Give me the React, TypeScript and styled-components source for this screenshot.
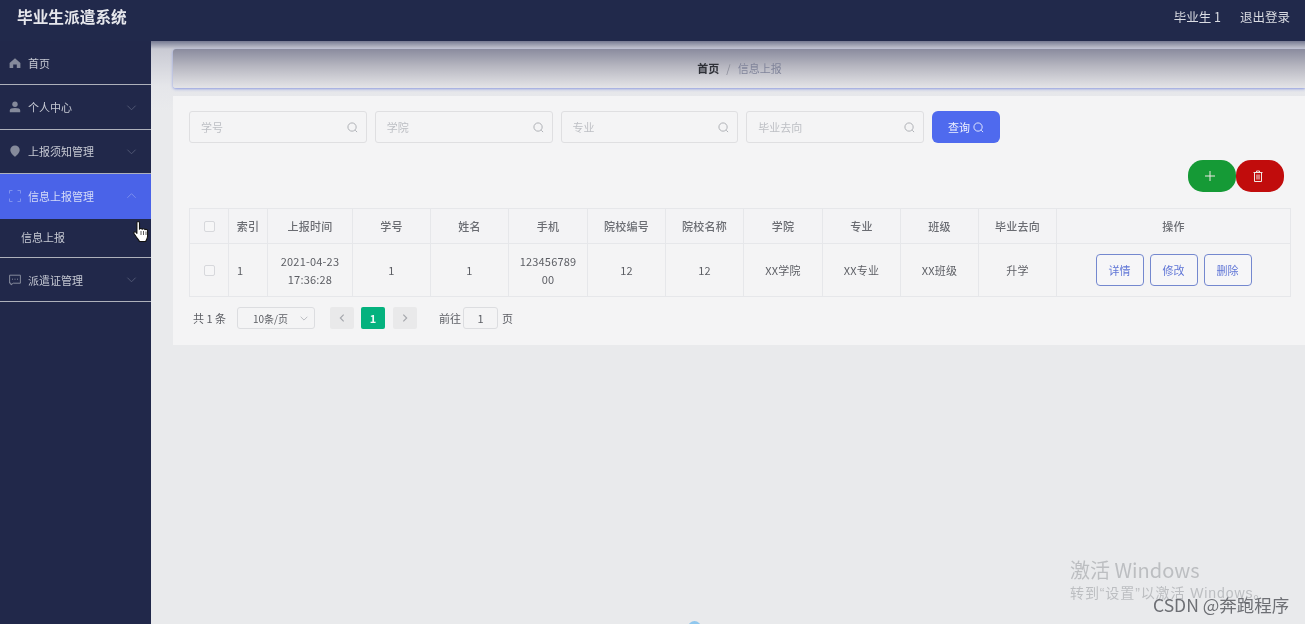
import styled, { createGlobalStyle } from 'styled-components';

const GlobalStyle = createGlobalStyle`
  html, body {
    margin: 0;
    padding: 0;
    background: #e9eaec;
  }
  * {
    box-sizing: border-box;
  }
  body {
    font-family: "Noto Sans CJK SC", "Liberation Sans", sans-serif;
    font-size: 11px;
    overflow: hidden;
  }
`;

const Page = styled.div`
  position: relative;
  width: 1305px;
  height: 624px;
  display: flex;
  flex-direction: column;
  overflow: hidden;
  filter: blur(0.35px);
`;

const TopBar = styled.header`
  height: 41px;
  flex: none;
  display: flex;
  align-items: center;
  justify-content: space-between;
  padding: 0 15px 8px 17px;
  background: #21294b;
  color: #d9dbe2;
`;

const Title = styled.div`
  font-size: 15.7px;
  font-weight: 700;
  color: #e6e7ec;
`;

const UserBox = styled.div`
  display: flex;
  gap: 19px;
  font-size: 12.5px;
`;

const Body = styled.div`
  flex: 1;
  display: flex;
  min-height: 0;
`;

const Sidebar = styled.aside`
  width: 151px;
  flex: none;
  background: #21284a;
`;

const MenuItem = styled.div<{ $active?: boolean }>`
  height: 44.4px;
  display: flex;
  align-items: center;
  gap: 7px;
  padding: 0 14px 0 9px;
  background: ${({ $active }) => ($active ? '#4a63e8' : 'transparent')};
  border-bottom: 1px solid ${({ $active }) => ($active ? '#4a63e8' : '#aeb1bb')};
  color: ${({ $active }) => ($active ? '#d5dbf8' : '#c6c9d3')};
  font-size: 11px;
  svg.lead {
    width: 12px;
    height: 12px;
    flex: none;
    color: ${({ $active }) => ($active ? '#7f92ee' : '#858a9b')};
  }
  svg.arrow {
    width: 11px;
    height: 11px;
    margin-left: auto;
    flex: none;
    color: ${({ $active }) => ($active ? '#7f92ee' : '#545b77')};
  }
`;

const SubItem = styled.div`
  height: 39.5px;
  display: flex;
  align-items: center;
  padding: 0 0 1px 21px;
  border-bottom: 1px solid #aeb1bb;
  color: #c6c9d3;
  font-size: 11px;
`;

const Main = styled.main`
  flex: 1;
  min-width: 0;
  padding: 8px 0 0 22px;
  background: linear-gradient(180deg, #767a92 0, #c9cad3 8px, #e5e6ea 45px, #e9eaec 70px);
`;

const Crumbs = styled.nav`
  height: 39px;
  display: flex;
  align-items: center;
  justify-content: center;
  gap: 7px;
  padding: 0 0 2px 1px;
  border-radius: 3px 0 0 3px;
  background: linear-gradient(180deg, #8a8b9e 0, #b7b7c1 45%, #e4e4e7 100%);
  box-shadow: 0 1px 3px #8a98de;
  font-size: 11px;
`;

const CrumbHome = styled.span`
  color: #2f3138;
  font-weight: 700;
`;

const CrumbSep = styled.span`
  color: #8b8d99;
`;

const CrumbNow = styled.span`
  color: #80849a;
`;

const Panel = styled.section`
  margin-top: 8px;
  padding: 15px 14px 16px 16px;
  background: #f4f4f5;
`;

const SearchRow = styled.div`
  display: flex;
  gap: 8px;
`;

const SearchField = styled.div`
  width: 177.75px;
  height: 32px;
  display: flex;
  align-items: center;
  justify-content: space-between;
  padding: 0 8px 0 11px;
  border: 1px solid #dfdfe1;
  border-radius: 3px;
  color: #bdbfc4;
  font-size: 11px;
  svg {
    width: 11px;
    height: 11px;
    color: #a9abb0;
  }
`;

const QueryButton = styled.button`
  width: 68px;
  height: 32px;
  display: flex;
  align-items: center;
  justify-content: center;
  gap: 3px;
  padding: 0;
  border: 0;
  border-radius: 6px;
  background: #4f6aee;
  color: #eef1fe;
  font: inherit;
  svg {
    width: 11px;
    height: 11px;
  }
`;

const ActionRow = styled.div`
  display: flex;
  justify-content: flex-end;
  margin: 17px 7px 0 0;
`;

const RoundButton = styled.button<{ $bg: string }>`
  width: 48px;
  height: 32px;
  display: flex;
  align-items: center;
  justify-content: center;
  padding: 0 4px 0 0;
  border: 0;
  border-radius: 15px;
  background: ${({ $bg }) => $bg};
  color: #f0e9e4;
  svg {
    width: 12px;
    height: 12px;
  }
`;

const columns = '39px 39px 85px 78px 78px 79px 78px 78px 79px 78px 78px 78px 1fr';

const Table = styled.div`
  margin-top: 16px;
  border-top: 1px solid #e6e7ea;
  border-left: 1px solid #e6e7ea;
`;

const Row = styled.div<{ $head?: boolean }>`
  display: grid;
  grid-template-columns: ${columns};
  height: ${({ $head }) => ($head ? '35px' : '53px')};
  color: ${({ $head }) => ($head ? '#6a6c72' : '#5c5e64')};
  font-weight: ${({ $head }) => ($head ? 500 : 400)};
  background: ${({ $head }) => ($head ? '#f3f3f5' : '#f4f4f5')};
  white-space: ${({ $head }) => ($head ? 'nowrap' : 'normal')};
`;

const Cell = styled.div<{ $left?: boolean }>`
  display: flex;
  align-items: center;
  justify-content: ${({ $left }) => ($left ? 'flex-start' : 'center')};
  padding: 0 ${({ $left }) => ($left ? '8px' : '10px')};
  border-right: 1px solid #e6e7ea;
  border-bottom: 1px solid #e6e7ea;
  line-height: 18px;
  letter-spacing: 0.2px;
  text-align: center;
  word-break: break-all;
`;

const DateText = styled.span`
  word-break: normal;
`;

const Check = styled.span`
  width: 11px;
  height: 11px;
  flex: none;
  border: 1px solid #d7d8dc;
  border-radius: 2px;
  background: #f6f6f7;
`;

const ButtonGroup = styled.div`
  display: flex;
  gap: 6px;
`;

const RowButton = styled.button`
  width: 48px;
  height: 32px;
  padding: 0;
  border: 1px solid #7488cf;
  border-radius: 4px;
  background: #f6f6f8;
  color: #5f75d6;
  font: inherit;
`;

const Pager = styled.div`
  display: flex;
  align-items: center;
  height: 22px;
  margin-top: 10px;
  padding-left: 4px;
  color: #5c5e64;
`;

const Total = styled.span`
  width: 44px;
`;

const PageSize = styled.div`
  width: 78px;
  height: 22px;
  display: flex;
  align-items: center;
  justify-content: space-between;
  padding: 0 5px 0 15px;
  border: 1px solid #dcdde0;
  border-radius: 3px;
  font-size: 10px;
  svg {
    width: 10px;
    height: 10px;
    color: #b0b2b8;
  }
`;

const PageButton = styled.div<{ $current?: boolean }>`
  width: 24px;
  height: 22px;
  display: flex;
  align-items: center;
  justify-content: center;
  margin-left: ${({ $current }) => ($current ? '7px' : '8px')};
  border-radius: 2px;
  background: ${({ $current }) => ($current ? '#04b27e' : '#e9e9ea')};
  color: ${({ $current }) => ($current ? '#f2fbf8' : '#a5a7ac')};
  font-weight: ${({ $current }) => ($current ? 700 : 400)};
  svg {
    width: 10px;
    height: 10px;
  }
`;

const FirstPageButton = styled(PageButton)`
  margin-left: 15px;
`;

const GoLabel = styled.span`
  margin-left: 22px;
`;

const GoInput = styled.div`
  width: 35px;
  height: 22px;
  display: flex;
  align-items: center;
  justify-content: center;
  margin: 0 4px 0 2px;
  border: 1px solid #dcdde0;
  border-radius: 3px;
`;

const Pointer = styled.svg`
  position: absolute;
  left: 133px;
  top: 220px;
  width: 18px;
  height: 23px;
`;

const Watermark = styled.div`
  position: absolute;
  left: 1070px;
  top: 557px;
  color: #bcbec1;
  white-space: nowrap;
`;

const WatermarkTitle = styled.div`
  font-size: 20px;
  line-height: 26px;
`;

const WatermarkHint = styled.div`
  font-family: "Liberation Sans", "Noto Sans CJK SC", sans-serif;
  font-size: 14px;
  letter-spacing: 0.9px;
  line-height: 20px;
`;

const Credit = styled.div`
  position: absolute;
  left: 1153px;
  top: 593px;
  color: #6d6f74;
  font-size: 17.5px;
  line-height: 24px;
  white-space: nowrap;
`;

const Spinner = styled.div`
  position: absolute;
  left: 688px;
  top: 621px;
  width: 13px;
  height: 13px;
  border-radius: 50%;
  background: #8fc7ee;
`;

const SearchIcon = () => (
  <svg viewBox="0 0 12 12" fill="none" stroke="currentColor" strokeWidth="1">
    <circle cx="5.5" cy="5.5" r="4.5" />
    <path d="M9 9l2 2" />
  </svg>
);

const ChevronDown = () => (
  <svg className="arrow" viewBox="0 0 12 12" fill="none" stroke="currentColor" strokeWidth="1">
    <path d="M1.5 4l4.5 4.5L10.5 4" />
  </svg>
);

const ChevronUp = () => (
  <svg className="arrow" viewBox="0 0 12 12" fill="none" stroke="currentColor" strokeWidth="1">
    <path d="M1.5 8.5L6 4l4.5 4.5" />
  </svg>
);

const HomeIcon = () => (
  <svg className="lead" viewBox="0 0 12 12" fill="currentColor">
    <path d="M6 1.2L.6 6v5h3.6V7.6h3.6V11h3.6V6z" />
  </svg>
);

const UserIcon = () => (
  <svg className="lead" viewBox="0 0 12 12" fill="currentColor">
    <circle cx="6" cy="3.2" r="2.7" />
    <path d="M.8 11.2V9.4C.8 7.8 2.6 7 6 7s5.2.8 5.2 2.4v1.8z" />
  </svg>
);

const PinIcon = () => (
  <svg className="lead" viewBox="0 0 12 12" fill="currentColor">
    <path d="M6 .4a4.7 4.7 0 0 0-4.7 4.7C1.3 8 4.2 10.4 6 11.8c1.8-1.4 4.7-3.8 4.7-6.7A4.7 4.7 0 0 0 6 .4z" />
  </svg>
);

const CornersIcon = () => (
  <svg className="lead" viewBox="0 0 12 12" fill="none" stroke="currentColor" strokeWidth="1">
    <path d="M.5 3.5v-3h3M8.5.5h3v3M11.5 8.5v3h-3M3.5 11.5h-3v-3" />
  </svg>
);

const ChatIcon = () => (
  <svg className="lead" viewBox="0 0 12 12" fill="none" stroke="currentColor" strokeWidth="1">
    <path d="M.6 1.2h10.8v8H4.2L2 11V9.2H.6z" />
    <path d="M3 5.2h1M5.5 5.2h1M8 5.2h1" />
  </svg>
);

const PlusIcon = () => (
  <svg viewBox="0 0 12 12" fill="none" stroke="currentColor" strokeWidth="1">
    <path d="M6 1v10M1 6h10" />
  </svg>
);

const TrashIcon = () => (
  <svg viewBox="0 0 12 12" fill="none" stroke="currentColor" strokeWidth="1">
    <path d="M1.5 2.5h9M4.5 2.5V1h3v1.5M2.5 2.5v9h7v-9M5 4.5v5M7 4.5v5" />
  </svg>
);

const heads = ['学号', '姓名', '手机', '院校编号', '院校名称', '学院', '专业', '班级', '毕业去向'];
const values = ['1', '1', '12345678900', '12', '12', 'XX学院', 'XX专业', 'XX班级', '升学'];

function App() {
  return (
    <Page>
      <GlobalStyle />
      <TopBar>
        <Title>毕业生派遣系统</Title>
        <UserBox>
          <span>毕业生 1</span>
          <span>退出登录</span>
        </UserBox>
      </TopBar>
      <Body>
        <Sidebar>
          <MenuItem>
            <HomeIcon />
            首页
          </MenuItem>
          <MenuItem>
            <UserIcon />
            个人中心
            <ChevronDown />
          </MenuItem>
          <MenuItem>
            <PinIcon />
            上报须知管理
            <ChevronDown />
          </MenuItem>
          <MenuItem $active>
            <CornersIcon />
            信息上报管理
            <ChevronUp />
          </MenuItem>
          <SubItem>信息上报</SubItem>
          <MenuItem>
            <ChatIcon />
            派遣证管理
            <ChevronDown />
          </MenuItem>
        </Sidebar>
        <Main>
          <Crumbs>
            <CrumbHome>首页</CrumbHome>
            <CrumbSep>/</CrumbSep>
            <CrumbNow>信息上报</CrumbNow>
          </Crumbs>
          <Panel>
            <SearchRow>
              {['学号', '学院', '专业', '毕业去向'].map((label) => (
                <SearchField key={label}>
                  {label}
                  <SearchIcon />
                </SearchField>
              ))}
              <QueryButton>
                查询
                <SearchIcon />
              </QueryButton>
            </SearchRow>
            <ActionRow>
              <RoundButton $bg="#159a36">
                <PlusIcon />
              </RoundButton>
              <RoundButton $bg="#c10c0c">
                <TrashIcon />
              </RoundButton>
            </ActionRow>
            <Table>
              <Row $head>
                <Cell>
                  <Check />
                </Cell>
                <Cell>索引</Cell>
                <Cell>上报时间</Cell>
                {heads.map((h) => (
                  <Cell key={h}>{h}</Cell>
                ))}
                <Cell>操作</Cell>
              </Row>
              <Row>
                <Cell>
                  <Check />
                </Cell>
                <Cell $left>1</Cell>
                <Cell>
                  <DateText>2021-04-23 17:36:28</DateText>
                </Cell>
                {values.map((v, i) => (
                  <Cell key={i}>{v}</Cell>
                ))}
                <Cell>
                  <ButtonGroup>
                    <RowButton>详情</RowButton>
                    <RowButton>修改</RowButton>
                    <RowButton>删除</RowButton>
                  </ButtonGroup>
                </Cell>
              </Row>
            </Table>
            <Pager>
              <Total>共 1 条</Total>
              <PageSize>
                10条/页
                <svg viewBox="0 0 12 12" fill="none" stroke="currentColor" strokeWidth="1">
                  <path d="M2 4.5l4 4 4-4" />
                </svg>
              </PageSize>
              <FirstPageButton>
                <svg viewBox="0 0 12 12" fill="none" stroke="currentColor" strokeWidth="1.4">
                  <path d="M8 2L4 6l4 4" />
                </svg>
              </FirstPageButton>
              <PageButton $current>1</PageButton>
              <PageButton>
                <svg viewBox="0 0 12 12" fill="none" stroke="currentColor" strokeWidth="1.4">
                  <path d="M4 2l4 4-4 4" />
                </svg>
              </PageButton>
              <GoLabel>前往</GoLabel>
              <GoInput>1</GoInput>
              <span>页</span>
            </Pager>
          </Panel>
        </Main>
      </Body>
      <Pointer viewBox="0 0 18 23">
        <path
          d="M5 1.5c.9 0 1.5.6 1.5 1.5v6.2c.2-.9 2.5-1 2.8.1.4-.8 2.4-.7 2.7.4.6-.6 2.5-.4 2.6.9v5.4c0 2.6-1.4 4-2 5.5H6.5c-.8-1.7-2-2.7-3.2-4.5L1 13.5c-.6-1.2.8-2.3 1.9-1.3l1 1.1V3c0-.9.2-1.5 1.1-1.500z"
          fill="#fff"
          stroke="#111"
          strokeWidth="1.1"
          strokeLinejoin="round"
        />
        <path d="M8 11v4M10.5 11v4M13 11.5V15" stroke="#333" strokeWidth=".8" />
      </Pointer>
      <Watermark>
        <WatermarkTitle>激活 Windows</WatermarkTitle>
        <WatermarkHint>转到“设置”以激活 Windows。</WatermarkHint>
      </Watermark>
      <Credit>CSDN @奔跑程序</Credit>
      <Spinner />
    </Page>
  );
}

export default App;
